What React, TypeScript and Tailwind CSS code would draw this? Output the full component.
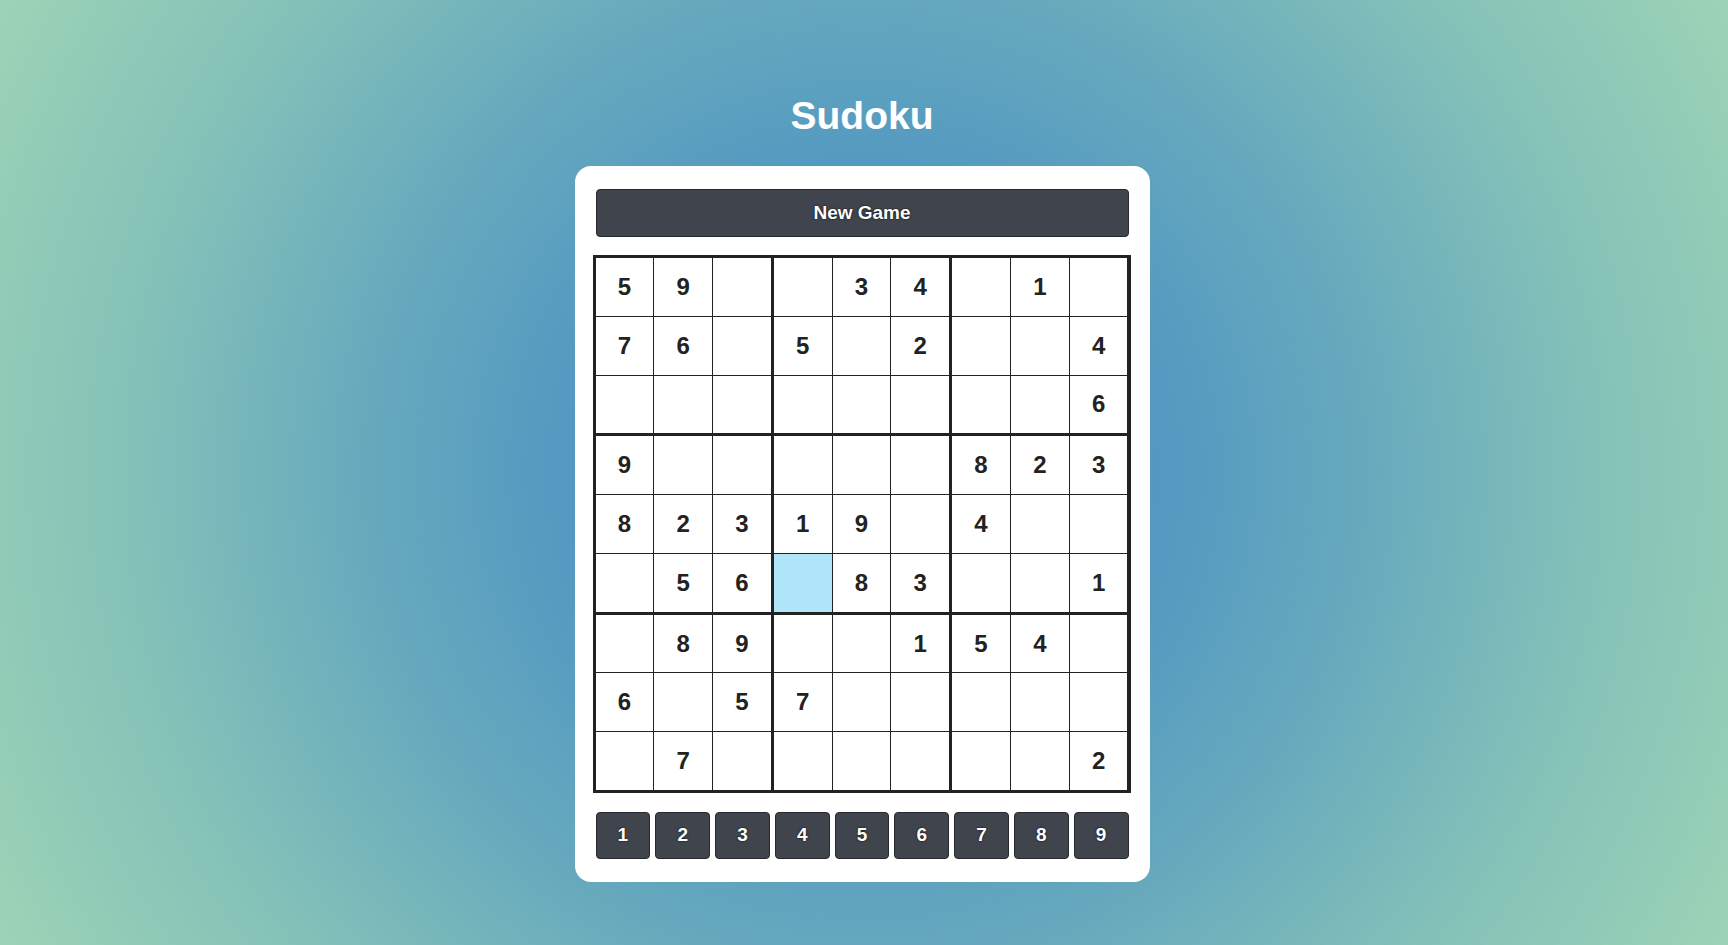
import { useState } from 'react'

const PUZZLE: (number | null)[][] = [
  [5, 9, null, null, 3, 4, null, 1, null],
  [7, 6, null, 5, null, 2, null, null, 4],
  [null, null, null, null, null, null, null, null, 6],
  [9, null, null, null, null, null, 8, 2, 3],
  [8, 2, 3, 1, 9, null, 4, null, null],
  [null, 5, 6, null, 8, 3, null, null, 1],
  [null, 8, 9, null, null, 1, 5, 4, null],
  [6, null, 5, 7, null, null, null, null, null],
  [null, 7, null, null, null, null, null, null, 2],
]

const BOXES = [0, 1, 2, 3, 4, 5, 6, 7, 8]

export default function App() {
  const [board, setBoard] = useState(PUZZLE)
  const [selected, setSelected] = useState<[number, number]>([5, 3])

  const place = (n: number) => {
    const [r, c] = selected
    if (PUZZLE[r][c] !== null) return
    setBoard((b) => b.map((row, ri) => row.map((v, ci) => (ri === r && ci === c ? n : v))))
  }

  return (
    <div className="min-h-screen w-full flex flex-col items-center pr-[4px] bg-[radial-gradient(circle,#4a91c2_0%,#5399c1_30%,#66a9bd_50%,#84c2b8_75%,#9dd3b6_100%)] font-['Liberation_Sans',Arial,sans-serif]">
      <h1 className="mt-[96px] text-[39px] leading-10 font-bold text-white">Sudoku</h1>

      <div className="mt-[30px] w-[575px] bg-white rounded-2xl px-[18px] pt-[23px] pb-[23px]">
        {/* New game */}
        <button
          onClick={() => setBoard(PUZZLE)}
          className="block mx-[3px] w-[533px] h-[48px] rounded bg-[#40444c] border border-[#26292e] text-white text-[19px] font-bold [text-shadow:0_0_2px_#000]"
        >
          New Game
        </button>

        {/* Board: 3x3 boxes, each 3x3 cells */}
        <div className="mt-[18px] w-[538px] grid grid-cols-3 gap-[3px] p-[3px] bg-[#222]">
          {BOXES.map((b) => {
            const br = Math.floor(b / 3) * 3
            const bc = (b % 3) * 3
            return (
              <div key={b} className="grid grid-cols-3 gap-px">
                {BOXES.map((i) => {
                  const r = br + Math.floor(i / 3)
                  const c = bc + (i % 3)
                  const v = board[r][c]
                  const isSel = selected[0] === r && selected[1] === c
                  return (
                    <div
                      key={i}
                      onClick={() => setSelected([r, c])}
                      className={`aspect-square flex items-center justify-center text-[24px] font-bold text-[#222] cursor-pointer ${
                        isSel ? 'bg-[#b0e4f8]' : 'bg-white'
                      }`}
                    >
                      {v ?? ''}
                    </div>
                  )
                })}
              </div>
            )
          })}
        </div>

        {/* Number pad */}
        <div className="mt-[19px] mx-[3px] flex gap-[5px]">
          {[1, 2, 3, 4, 5, 6, 7, 8, 9].map((n) => (
            <button
              key={n}
              onClick={() => place(n)}
              className="flex-1 h-[47px] rounded bg-[#40444c] border border-[#26292e] text-white text-[19px] font-bold [text-shadow:0_0_2px_#000]"
            >
              {n}
            </button>
          ))}
        </div>
      </div>
    </div>
  )
}
